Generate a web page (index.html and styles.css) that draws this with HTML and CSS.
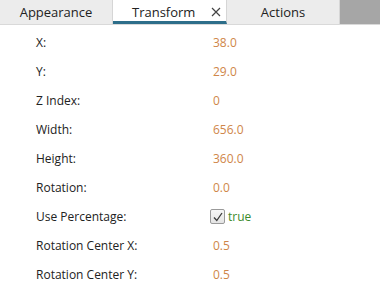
FILE: index.html
```html
<!DOCTYPE html>
<html lang="en">
<head>
  <meta charset="UTF-8">
  <title>Properties</title>
  <link rel="stylesheet" href="styles.css">
</head>
<body>
  <div class="tabs">
    <div class="tab">Appearance</div>
    <div class="tab active">
      Transform
      <svg class="close" width="10" height="10" viewBox="0 0 10 10"><path d="M1 1 L9 9 M9 1 L1 9" stroke="#444" stroke-width="1.2"/></svg>
    </div>
    <div class="tab">Actions</div>
    <div class="tab-fill"></div>
  </div>

  <div class="props">
    <div class="row"><span class="label">X:</span><span class="value">38.0</span></div>
    <div class="row"><span class="label">Y:</span><span class="value">29.0</span></div>
    <div class="row"><span class="label">Z Index:</span><span class="value">0</span></div>
    <div class="row"><span class="label">Width:</span><span class="value">656.0</span></div>
    <div class="row"><span class="label">Height:</span><span class="value">360.0</span></div>
    <div class="row"><span class="label">Rotation:</span><span class="value">0.0</span></div>
    <div class="row">
      <span class="label">Use Percentage:</span>
      <span class="value bool">
        <span class="check">
          <svg width="12" height="12" viewBox="0 0 12 12"><path d="M2 6.5 L4.8 9.5 L10 2" fill="none" stroke="#3a3a3a" stroke-width="1.3"/></svg>
        </span>
        true
      </span>
    </div>
    <div class="row"><span class="label">Rotation Center X:</span><span class="value">0.5</span></div>
    <div class="row"><span class="label">Rotation Center Y:</span><span class="value">0.5</span></div>
  </div>
</body>
</html>
```

FILE: styles.css
```css
* {
  margin: 0;
  padding: 0;
  box-sizing: border-box;
}

body {
  background: white;
  font-family: 'Open Sans', sans-serif;
  font-size: 12px;
  color: #222;
}

.tabs {
  display: flex;
  height: 25px;
  border-bottom: 1px solid #d9d9d9;
}

.tab {
  width: 113px;
  background: #ececec;
  display: flex;
  align-items: center;
  justify-content: center;
  font-size: 13px;
  color: #222;
  border-right: 1px solid #d6d6d6;
}

.tab.active {
  width: 114px;
  background: white;
  border-bottom: 3px solid #2d6e8a;
  padding-top: 2px;
  justify-content: flex-start;
  padding-left: 19px;
}

.close {
  margin-left: 16px;
}

.tab-fill {
  flex: 1;
  background: #a6a6a6;
}

.props {
  padding-top: 3px;
}

.row {
  display: flex;
  height: 29px;
  align-items: center;
}

.label {
  width: 213px;
  padding-left: 36px;
}

.value {
  color: #cf8649;
}

.bool {
  display: flex;
  align-items: center;
  color: #3b8a2c;
  margin-left: -3px;
}

.check {
  width: 15px;
  height: 15px;
  border: 1px solid #9a9a9a;
  border-radius: 2px;
  background: linear-gradient(#f6f6f6, #e4e4e4);
  display: flex;
  align-items: center;
  justify-content: center;
  margin-right: 3px;
}
```
